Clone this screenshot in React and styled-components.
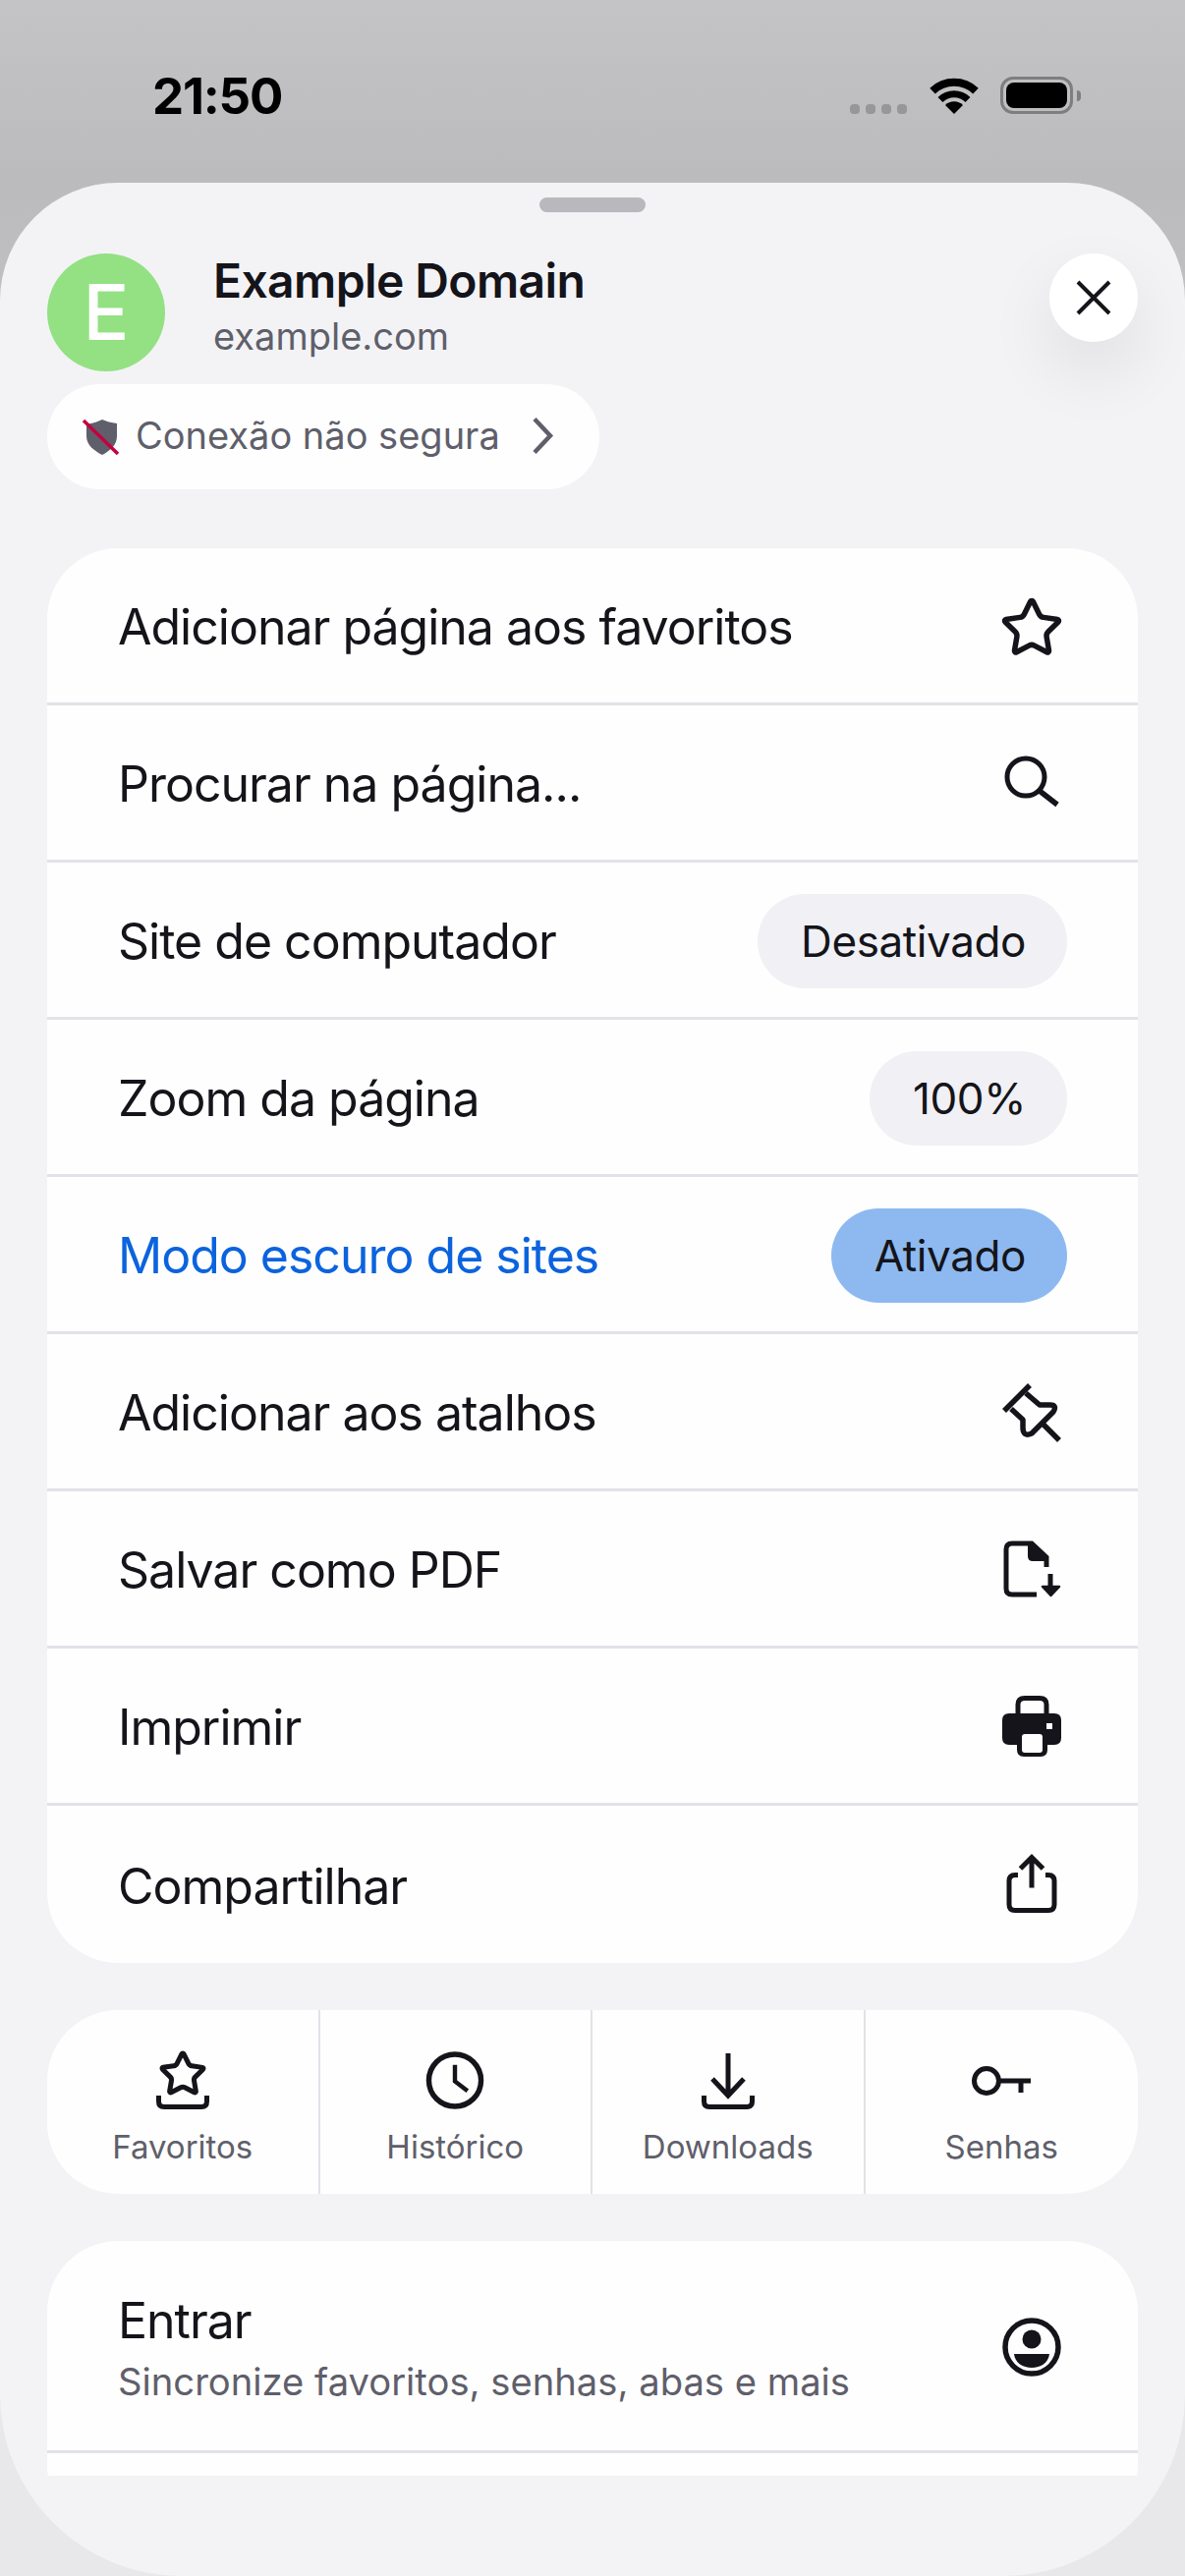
import styled, { createGlobalStyle } from "styled-components";

const GlobalStyle = createGlobalStyle`
  * {
    box-sizing: border-box;
  }

  html,
  body {
    margin: 0;
    padding: 0;
  }

  body {
    font-family: Inter, "Noto Sans", "Liberation Sans", sans-serif;
    color: #14141a;
  }
`;

const Screen = styled.div`
  width: 1206px;
  height: 2622px;
  overflow: hidden;
  background: linear-gradient(
    #c4c4c6 0,
    #bbbbbd 186px,
    #c1c1c3 330px,
    #e8e8ea 2420px
  );
`;

const StatusBar = styled.div`
  height: 186px;
  padding: 79px 106px 0 155px;
  display: flex;
  justify-content: space-between;
  align-items: flex-start;
`;

const Time = styled.div`
  font-size: 51px;
  line-height: 38px;
  font-weight: 700;
  letter-spacing: -1.2px;
  color: #000;
`;

const StatusIcons = styled.div`
  display: flex;
  align-items: flex-end;
  height: 37px;
`;

const Dots = styled.div`
  display: flex;
  gap: 6px;
  margin-right: 22px;
`;

const Dot = styled.span`
  width: 10px;
  height: 10px;
  border-radius: 4px;
  background: #979799;
`;

const Battery = styled.div`
  width: 74px;
  height: 38px;
  margin-left: 21px;
  padding: 3px;
  border: 3px solid #7e7e80;
  border-radius: 13px;
`;

const BatteryFill = styled.div`
  height: 100%;
  border-radius: 8px;
  background: #000;
`;

const BatteryCap = styled.div`
  width: 4px;
  height: 11px;
  margin: 0 0 13px 4px;
  border-radius: 0 4px 4px 0;
  background: #7e7e80;
`;

const Sheet = styled.div`
  height: 2436px;
  padding: 15px 48px 0;
  background: #f3f3f6;
  border-radius: 120px 120px 185px 185px;
`;

const Handle = styled.div`
  width: 108px;
  height: 15px;
  margin: 0 auto 42px;
  border-radius: 8px;
  background: #b8b8bd;
`;

const Header = styled.div`
  display: flex;
  align-items: flex-start;
`;

const Avatar = styled.div`
  width: 120px;
  height: 120px;
  flex: none;
  display: flex;
  align-items: center;
  justify-content: center;
  border-radius: 50%;
  background: #93e183;
  color: #fff;
  font-size: 78px;
  font-weight: 500;
  line-height: 1;
`;

const SiteInfo = styled.div`
  flex: 1;
  padding-left: 49px;
`;

const SiteName = styled.div`
  font-size: 48px;
  line-height: 56px;
  font-weight: 600;
  letter-spacing: -0.6px;
`;

const SiteHost = styled.div`
  font-size: 38px;
  line-height: 56px;
  color: #5f5f6b;
`;

const CloseButton = styled.div`
  width: 90px;
  height: 90px;
  flex: none;
  display: flex;
  align-items: center;
  justify-content: center;
  border-radius: 50%;
  background: #fff;
  box-shadow: 0 30px 70px rgba(0, 0, 0, 0.09);
`;

const SecurityChip = styled.div`
  width: 562px;
  height: 107px;
  margin: 13px 0 60px;
  padding-left: 37px;
  display: flex;
  align-items: center;
  border-radius: 54px;
  background: #fefefe;
  color: #5f5f6b;
  font-size: 38px;
`;

const ChipLabel = styled.span`
  margin: 0 32px 3px 17px;
  white-space: nowrap;
`;

const Scroller = styled.div`
  height: 1962px;
  overflow: hidden;
  display: flex;
  flex-direction: column;
  gap: 48px;
`;

const Card = styled.div`
  flex: none;
  background: #fefefe;
  border-radius: 72px;
`;

const ClippedCard = styled(Card)`
  height: 300px;
`;

const Row = styled.div`
  height: ${(p) => p.$height || 160}px;
  padding: 3px 72px 0;
  display: flex;
  align-items: center;
  justify-content: space-between;
  border-bottom: ${(p) => (p.$last ? "none" : "3px solid #e2e2e8")};
`;

const RowLabel = styled.div`
  font-size: 50px;
  line-height: 60px;
  letter-spacing: -1px;
  color: ${(p) => (p.$active ? "#0b63de" : "#14141a")};
  white-space: nowrap;
`;

const RowText = styled.div`
  padding-top: 3px;
`;

const RowHint = styled.div`
  margin-top: 7px;
  font-size: 38.2px;
  line-height: 50px;
  color: #5f5f6b;
  white-space: nowrap;
`;

const Pill = styled.div`
  height: 96px;
  padding: 0 42px 0 44px;
  display: flex;
  align-items: center;
  border-radius: 48px;
  font-size: 44px;
  letter-spacing: -0.4px;
  background: ${(p) => (p.$on ? "#8db9f0" : "#f0f0f5")};
`;

const IconSlot = styled.div`
  width: 72px;
  display: flex;
  justify-content: center;
`;

const TabCard = styled(Card)`
  height: 187px;
  display: grid;
  grid-template-columns: repeat(4, 1fr);
`;

const Tab = styled.div`
  display: flex;
  flex-direction: column;
  align-items: center;
  padding-top: 42px;
  border-right: ${(p) => (p.$last ? "none" : "2px solid #e2e2e8")};
`;

const TabIcon = styled.div`
  height: 59px;
  display: flex;
  align-items: ${(p) => p.$align || "flex-end"};
`;

const TabLabel = styled.div`
  margin-top: 18px;
  font-size: 33px;
  line-height: 40px;
  color: #5f5f6b;
`;

const Svg = styled.svg`
  display: block;
  flex: none;
  overflow: visible;
  fill: none;
  stroke: #14141a;
  stroke-width: 5.5;
`;

const starPath =
  "M11.525 2.295a.53.53 0 0 1 .95 0l2.31 4.679a2.123 2.123 0 0 0 1.595 1.16l5.166.756a.53.53 0 0 1 .294.904l-3.736 3.638a2.123 2.123 0 0 0-.611 1.878l.882 5.14a.53.53 0 0 1-.771.56l-4.618-2.428a2.122 2.122 0 0 0-1.973 0L6.396 21.01a.53.53 0 0 1-.77-.56l.881-5.139a2.122 2.122 0 0 0-.611-1.879L2.16 9.795a.53.53 0 0 1 .294-.906l5.165-.755a2.122 2.122 0 0 0 1.597-1.16z";

const StarIcon = () => (
  <Svg width="60" height="60" viewBox="0 0 60 60">
    <path d={starPath} transform="translate(-3 -2) scale(2.75)" strokeWidth="2" />
  </Svg>
);

const SearchIcon = () => (
  <Svg width="60" height="60" viewBox="0 0 60 60">
    <circle cx="24" cy="23" r="19" strokeWidth="5" />
    <path d="M38 37L56 51" />
  </Svg>
);

const PinIcon = () => (
  <Svg width="60" height="60" viewBox="0 0 60 60">
    <path d="M28 2L2 28" />
    <path
      d="M24 10L38 22H49Q56 22 52 29L30 51Q21 55 21 45V37L9 26"
      strokeLinejoin="round"
    />
    <path d="M41 41L58 58" />
  </Svg>
);

const PdfIcon = () => (
  <Svg width="60" height="60" viewBox="0 0 60 60">
    <path d="M35 55H10Q4 55 4 49V9Q4 3 10 3H30L45 17V27" strokeWidth="5" />
    <path d="M26 3H31L47 17V21H31Q26 21 26 16Z" fill="#14141a" stroke="none" />
    <path d="M49 34V50" strokeWidth="5" />
    <path
      d="M41 47H58L49.5 56Z"
      fill="#14141a"
      strokeWidth="2.5"
      strokeLinejoin="round"
    />
  </Svg>
);

const PrinterIcon = () => (
  <Svg width="60" height="64" viewBox="0 0 60 64">
    <path
      d="M16 20V9Q16 2.500 23 2.500H38Q45 2.500 45 9V20"
      strokeWidth="5"
    />
    <path
      d="M7 18H53Q60 18 60 25V43Q60 50 53 50H46V55Q46 62 39 62H22Q15 62 15 55V50H7Q0 50 0 43V25Q0 18 7 18Z"
      fill="#14141a"
      stroke="none"
    />
    <rect x="20" y="39" width="21" height="19" rx="3" fill="#fefefe" stroke="none" />
    <rect x="45" y="28" width="6" height="6" fill="#fefefe" stroke="none" />
  </Svg>
);

const ShareIcon = () => (
  <Svg width="60" height="62" viewBox="0 1.500 60 62">
    <path
      d="M16 21H13Q7 21 7 27V51Q7 57 13 57H47Q53 57 53 51V27Q53 21 47 21H44"
      strokeWidth="5"
    />
    <path d="M30 34V3M18.500 14.500L30 3L41.500 14.500" strokeWidth="5" />
  </Svg>
);

const Tray = () => (
  <path d="M2.500 45V51Q2.500 56.500 8 56.500H46Q51.500 56.500 51.500 51V45" strokeWidth="5" />
);

const FavoritesIcon = () => (
  <Svg width="54" height="59" viewBox="0 0 54 59">
    <path d={starPath} transform="translate(1.800 -2.300) scale(2.1)" strokeWidth="2.4" />
    <Tray />
  </Svg>
);

const ClockIcon = () => (
  <Svg width="60" height="59" viewBox="0 0 60 60">
    <circle cx="30" cy="30" r="27" />
    <path d="M30 14V31L43 41" strokeWidth="4.500" />
  </Svg>
);

const DownloadIcon = () => (
  <Svg width="54" height="59" viewBox="0 0 54 59">
    <Tray />
    <path d="M27 2V44M11 28L27 45L43 28" strokeWidth="5" />
  </Svg>
);

const KeyIcon = () => (
  <Svg width="60" height="30" viewBox="0 0 60 30">
    <circle cx="15" cy="15" r="12.500" strokeWidth="5" />
    <path d="M27 15H60M50 15V27" strokeWidth="5" />
  </Svg>
);

const UserIcon = () => (
  <Svg width="60" height="60" viewBox="0 0 60 60">
    <circle cx="30" cy="30" r="27" />
    <circle cx="30" cy="22" r="9.500" fill="#14141a" stroke="none" />
    <path d="M12 37H48C47 46 39 51 30 51C21 51 13 46 12 37Z" fill="#14141a" stroke="none" />
  </Svg>
);

const CloseIcon = () => (
  <Svg width="36" height="36" viewBox="0 0 36 36">
    <path d="M2 2L34 34M34 2L2 34" strokeWidth="4" />
  </Svg>
);

const WifiIcon = () => (
  <Svg width="52" height="37" viewBox="0 0 52 37">
    <path d="M4 13.600A32 32 0 0 1 48 13.600" stroke="#000" strokeWidth="8" />
    <path d="M12 22.400A20 20 0 0 1 40 22.400" stroke="#000" strokeWidth="7" />
    <path d="M26 37L17 28A12.700 12.700 0 0 1 35 28Z" fill="#000" stroke="none" />
  </Svg>
);

const ShieldIcon = () => (
  <Svg width="36" height="38" viewBox="0 0 36 38">
    <path
      d="M19 1C23 3 28 4 34 5V18C34 27 27 33 19 37C11 33 3 27 3 18V6C9 5 15 3 19 1Z"
      fill="#5f5f6b"
      stroke="none"
    />
    <path d="M0 2L35 36" stroke="#c4003d" strokeWidth="3.500" />
  </Svg>
);

const ChevronIcon = () => (
  <Svg width="22" height="38" viewBox="0 1.500 22 38">
    <path d="M3 2L19 19L3 36" stroke="#5f5f6b" strokeWidth="4.500" />
  </Svg>
);

const menuRows = [
  { label: "Adicionar página aos favoritos", icon: <StarIcon /> },
  { label: "Procurar na página...", icon: <SearchIcon /> },
  { label: "Site de computador", pill: "Desativado" },
  { label: "Zoom da página", pill: "100%" },
  { label: "Modo escuro de sites", pill: "Ativado", on: true },
  { label: "Adicionar aos atalhos", icon: <PinIcon /> },
  { label: "Salvar como PDF", icon: <PdfIcon /> },
  { label: "Imprimir", icon: <PrinterIcon /> },
  { label: "Compartilhar", icon: <ShareIcon /> },
];

const tabs = [
  { label: "Favoritos", icon: <FavoritesIcon /> },
  { label: "Histórico", icon: <ClockIcon /> },
  { label: "Downloads", icon: <DownloadIcon /> },
  { label: "Senhas", icon: <KeyIcon />, align: "center" },
];

function App() {
  return (
    <Screen>
      <GlobalStyle />
      <StatusBar>
        <Time>21:50</Time>
        <StatusIcons>
          <Dots>
            <Dot />
            <Dot />
            <Dot />
            <Dot />
          </Dots>
          <WifiIcon />
          <Battery>
            <BatteryFill />
          </Battery>
          <BatteryCap />
        </StatusIcons>
      </StatusBar>

      <Sheet>
        <Handle />
        <Header>
          <Avatar>E</Avatar>
          <SiteInfo>
            <SiteName>Example Domain</SiteName>
            <SiteHost>example.com</SiteHost>
          </SiteInfo>
          <CloseButton>
            <CloseIcon />
          </CloseButton>
        </Header>
        <SecurityChip>
          <ShieldIcon />
          <ChipLabel>Conexão não segura</ChipLabel>
          <ChevronIcon />
        </SecurityChip>

        <Scroller>
          <Card>
            {menuRows.map((row, i) => (
              <Row key={row.label} $last={i === menuRows.length - 1}>
                <RowLabel $active={row.on}>{row.label}</RowLabel>
                {row.pill ? (
                  <Pill $on={row.on}>{row.pill}</Pill>
                ) : (
                  <IconSlot>{row.icon}</IconSlot>
                )}
              </Row>
            ))}
          </Card>

          <TabCard>
            {tabs.map((tab, i) => (
              <Tab key={tab.label} $last={i === tabs.length - 1}>
                <TabIcon $align={tab.align}>{tab.icon}</TabIcon>
                <TabLabel>{tab.label}</TabLabel>
              </Tab>
            ))}
          </TabCard>

          <ClippedCard>
            <Row $height={216}>
              <RowText>
                <RowLabel>Entrar</RowLabel>
                <RowHint>Sincronize favoritos, senhas, abas e mais</RowHint>
              </RowText>
              <IconSlot>
                <UserIcon />
              </IconSlot>
            </Row>
          </ClippedCard>
        </Scroller>
      </Sheet>
    </Screen>
  );
}

export default App;
